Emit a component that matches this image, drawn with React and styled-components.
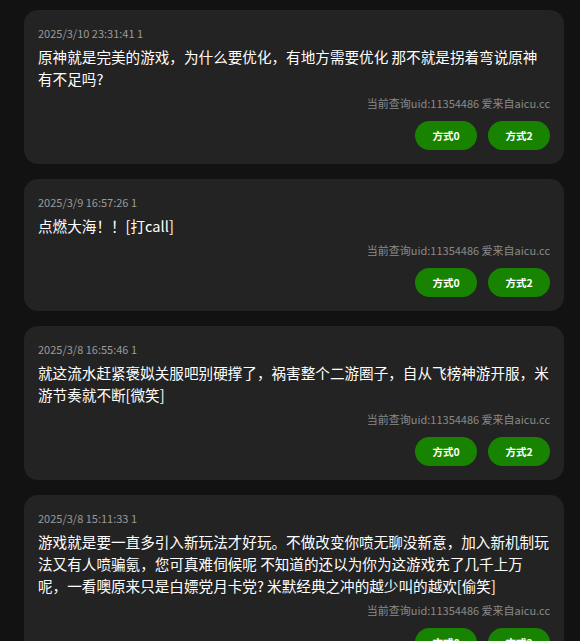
import React from "react";
import styled, { createGlobalStyle } from "styled-components";

const Global = createGlobalStyle`
  html, body {
    margin: 0;
    padding: 0;
    background: #121212;
  }
  body {
    font-family: "Noto Sans CJK SC", "Noto Sans", sans-serif;
    color: #ffffff;
  }
  * { box-sizing: border-box; }
`;

const Page = styled.div`
  display: flex;
  flex-direction: column;
  gap: 15px;
  padding: 10px 16px 10px 24px;
  width: 580px;
`;

const Card = styled.div`
  width: 540px;
  background: #232323;
  border-radius: 14px;
  padding: 14.5px 14px;
  display: flex;
  flex-direction: column;
`;

const Meta = styled.div`
  font-size: 11px;
  line-height: 17px;
  color: #9a9a9a;
`;

const Content = styled.div`
  margin-top: 4px;
  font-size: 14.6px;
  line-height: 22px;
  color: #ffffff;
`;

const Source = styled.div`
  margin-top: 5px;
  font-size: 11px;
  line-height: 17px;
  color: #8a8a8a;
  text-align: right;
`;

const Actions = styled.div`
  margin-top: 9px;
  display: flex;
  justify-content: flex-end;
  gap: 11px;
`;

const Button = styled.button`
  width: 62px;
  height: 29px;
  border: none;
  border-radius: 15px;
  background: #178300;
  color: #ffffff;
  font-family: "Noto Sans CJK SC", sans-serif;
  font-size: 10.5px;
  font-weight: 700;
  padding: 0;
  cursor: pointer;
`;

const items = [
  {
    meta: "2025/3/10 23:31:41 1",
    text: "原神就是完美的游戏，为什么要优化，有地方需要优化 那不就是拐着弯说原神有不足吗?",
  },
  { meta: "2025/3/9 16:57:26 1", text: "点燃大海！！[打call]" },
  {
    meta: "2025/3/8 16:55:46 1",
    text: "就这流水赶紧褒姒关服吧别硬撑了，祸害整个二游圈子，自从飞榜神游开服，米游节奏就不断[微笑]",
  },
  {
    meta: "2025/3/8 15:11:33 1",
    text: "游戏就是要一直多引入新玩法才好玩。不做改变你喷无聊没新意，加入新机制玩法又有人喷骗氪，您可真难伺候呢 不知道的还以为你为这游戏充了几千上万呢，一看噢原来只是白嫖党月卡党? 米默经典之冲的越少叫的越欢[偷笑]",
  },
];

export default function App() {
  return (
    <>
      <Global />
      <Page>
        {items.map((it, i) => (
          <Card key={i}>
            <Meta>{it.meta}</Meta>
            <Content>{it.text}</Content>
            <Source>当前查询uid:11354486 爱来自aicu.cc</Source>
            <Actions>
              <Button>方式0</Button>
              <Button>方式2</Button>
            </Actions>
          </Card>
        ))}
      </Page>
    </>
  );
}
